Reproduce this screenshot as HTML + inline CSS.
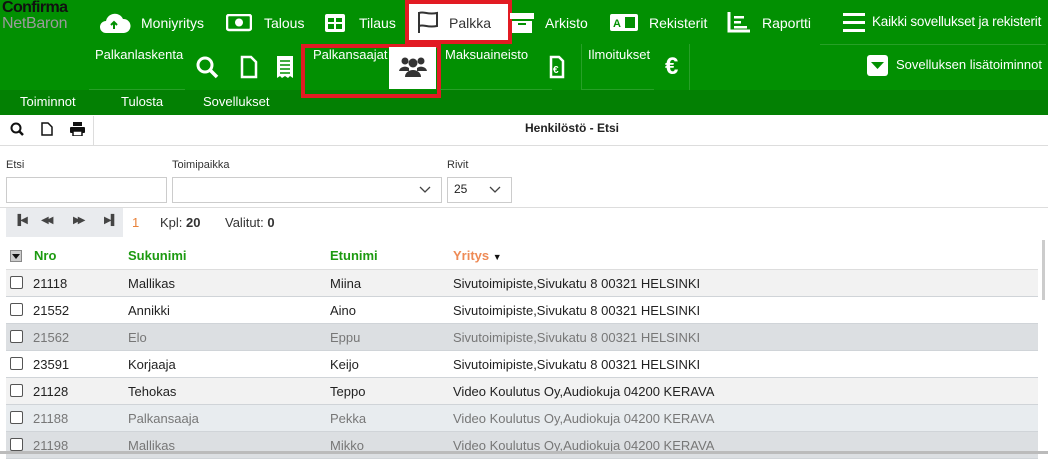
<!DOCTYPE html>
<html><head><meta charset="utf-8"><style>
*{margin:0;padding:0;box-sizing:border-box}
body{width:1048px;height:454px;overflow:hidden;background:#fff;font-family:"Liberation Sans",sans-serif;font-size:13px;color:#222;position:relative}
.a{position:absolute}
.g{background:#029002}
.w{color:#fff}
.nav{font-size:14px;color:#fff;white-space:nowrap}
.row{position:absolute;left:6px;width:1032px;height:27px;border-bottom:1px solid #d0d4d8;font-size:13px}
.row span{position:absolute;top:6px}
.cb{position:absolute;left:4px;top:6px;width:13px;height:13px;border:1px solid #555;border-radius:2px;background:#fff}
.lbl{font-size:11px;color:#333}
.inp{position:absolute;height:26px;border:1px solid #ccc;background:#fff}
</style></head><body>
<div class="a g" style="left:0;top:0;width:1048px;height:90px"></div>
<div class="a" style="left:0;top:90px;width:1048px;height:25px;background:#038003"></div>
<!-- logo -->
<div class="a" style="left:2px;top:0px;font-size:16px;font-weight:bold;color:#111;letter-spacing:-0.6px;line-height:16px">Confirma</div>
<div class="a" style="left:2px;top:16px;font-size:16px;color:#9a9a9a;letter-spacing:-0.3px;line-height:16px">NetBaron</div>
<!-- row1 nav -->
<svg class="a" style="left:99px;top:12px" width="32" height="22" viewBox="0 0 32 22"><path d="M7 21a6 6 0 0 1 0-12 9 9 0 0 1 17-2 7 7 0 0 1 1 14z" fill="#fff"/><path d="M15 17v-7M12 13l3-3 3 3" stroke="#029002" stroke-width="2" fill="none"/></svg>
<div class="a nav" style="left:141px;top:15px">Moniyritys</div>
<svg class="a" style="left:226px;top:14px" width="26" height="18"><rect x="1" y="1" width="24" height="15" rx="2" fill="none" stroke="#fff" stroke-width="2.5"/><circle cx="13" cy="8.5" r="4" fill="#fff"/></svg>
<div class="a nav" style="left:264px;top:15px">Talous</div>
<svg class="a" style="left:324px;top:13px" width="22" height="20"><rect x="1" y="1" width="20" height="18" rx="2" fill="#fff"/><rect x="4" y="5" width="6" height="4" fill="#029002"/><rect x="12" y="5" width="6" height="4" fill="#029002"/><rect x="4" y="11" width="6" height="5" fill="#029002"/><rect x="12" y="11" width="6" height="5" fill="#029002"/></svg>
<div class="a nav" style="left:359px;top:15px">Tilaus</div>
<div class="a" style="left:405px;top:0;width:107px;height:44px;background:#fff;border:4px solid #e21b23"></div>
<svg class="a" style="left:416px;top:10px" width="24" height="24"><path d="M3 23V2M3 3c5-2 8 2 18 0v13c-10 2-13-2-18 0" fill="none" stroke="#333" stroke-width="2"/></svg>
<div class="a" style="left:449px;top:15px;font-size:14px;color:#333">Palkka</div>
<svg class="a" style="left:510px;top:12px" width="24" height="22"><rect x="0" y="1" width="24" height="6" fill="#fff"/><rect x="2" y="9" width="20" height="12" fill="#fff"/><rect x="8" y="11" width="8" height="2" fill="#029002"/></svg>
<div class="a nav" style="left:545px;top:15px">Arkisto</div>
<svg class="a" style="left:610px;top:14px" width="28" height="17"><rect width="28" height="17" rx="2" fill="#fff"/><text x="3" y="13" font-size="11" font-weight="bold" fill="#029002" font-family="Liberation Sans">A</text><rect x="15" y="3" width="10" height="11" fill="#029002"/></svg>
<div class="a nav" style="left:649px;top:15px">Rekisterit</div>
<svg class="a" style="left:727px;top:11px" width="24" height="22"><path d="M2 1v19h21" fill="none" stroke="#fff" stroke-width="3"/><rect x="7" y="5" width="10" height="2.5" fill="#fff"/><rect x="7" y="10" width="7" height="2.5" fill="#fff"/><rect x="7" y="15" width="13" height="2.5" fill="#fff"/></svg>
<div class="a nav" style="left:762px;top:15px">Raportti</div>
<svg class="a" style="left:843px;top:12px" width="22" height="20"><rect y="1" width="22" height="3" fill="#fff"/><rect y="9" width="22" height="3" fill="#fff"/><rect y="17" width="22" height="3" fill="#fff"/></svg>
<div class="a nav" style="left:872px;top:14px;font-size:13.5px;letter-spacing:-0.2px">Kaikki sovellukset ja rekisterit</div>
<div class="a" style="left:820px;top:44px;width:226px;height:1px;background:#27a027"></div>
<!-- row2 -->
<div class="a nav" style="left:95px;top:47px;font-size:13px">Palkanlaskenta</div>
<div class="a" style="left:89px;top:89px;width:96px;height:1px;background:#27a027"></div>
<svg class="a" style="left:195px;top:55px" width="24" height="24"><circle cx="10" cy="10" r="7" fill="none" stroke="#fff" stroke-width="3"/><path d="M15 15l7 7" stroke="#fff" stroke-width="3.5"/></svg>
<svg class="a" style="left:240px;top:55px" width="18" height="24"><path d="M2 2h9l5 5v15H2z" fill="none" stroke="#fff" stroke-width="2.5"/></svg>
<svg class="a" style="left:276px;top:55px" width="18" height="24"><path d="M1 1h16v22l-3-2-2 2-3-2-3 2-2-2-3 2z" fill="#fff"/><path d="M4 6h10M4 10h10M4 14h10M4 18h10" stroke="#029002" stroke-width="1.5"/></svg>
<div class="a" style="left:301px;top:44px;width:140px;height:54px;border:4px solid #e21b23"></div>
<div class="a" style="left:389px;top:47px;width:47px;height:42px;background:#fff"></div>
<svg class="a" style="left:399px;top:56px" width="28" height="22"><circle cx="6" cy="5" r="3.5" fill="#333"/><circle cx="22" cy="5" r="3.5" fill="#333"/><circle cx="14" cy="7" r="4.5" fill="#333"/><path d="M0 15a6 5 0 0 1 10-3v3zM28 15a6 5 0 0 0-10-3v3zM6 21a8 7 0 0 1 16 0z" fill="#333"/></svg>
<div class="a nav" style="left:313px;top:47px;font-size:13px">Palkansaajat</div>
<div class="a nav" style="left:445px;top:47px;font-size:13px">Maksuaineisto</div>
<div class="a" style="left:440px;top:89px;width:112px;height:1px;background:#27a027"></div>
<svg class="a" style="left:549px;top:55px" width="16" height="24"><path d="M2 2h8l4 4v16H2z" fill="none" stroke="#fff" stroke-width="2.5"/><text x="4" y="18" font-size="10" font-weight="bold" fill="#fff" font-family="Liberation Sans">€</text></svg>
<div class="a" style="left:581px;top:44px;width:1px;height:46px;background:#27a027"></div>
<div class="a nav" style="left:588px;top:47px;font-size:13px">Ilmoitukset</div>
<div class="a" style="left:581px;top:89px;width:73px;height:1px;background:#27a027"></div>
<div class="a w" style="left:665px;top:53px;font-size:24px;font-weight:bold">€</div>
<div class="a" style="left:689px;top:44px;width:1px;height:46px;background:#27a027"></div>
<svg class="a" style="left:867px;top:55px" width="21" height="21"><rect width="21" height="21" rx="3" fill="#fff"/><path d="M4 7h13l-6.5 7z" fill="#029002"/></svg>
<div class="a nav" style="left:896px;top:57px;font-size:13px">Sovelluksen lisätoiminnot</div>
<!-- strip -->
<div class="a nav" style="left:20px;top:94px;font-size:13px">Toiminnot</div>
<div class="a nav" style="left:121px;top:94px;font-size:13px">Tulosta</div>
<div class="a nav" style="left:203px;top:94px;font-size:13px">Sovellukset</div>
<!-- toolbar -->
<div class="a" style="left:93px;top:116px;width:1px;height:29px;background:#ddd"></div>
<div class="a" style="left:0;top:145px;width:1048px;height:1px;background:#ddd"></div>
<svg class="a" style="left:10px;top:122px" width="14" height="14"><circle cx="6" cy="6" r="4.5" fill="none" stroke="#111" stroke-width="2"/><path d="M9 9l4 4" stroke="#111" stroke-width="2.5"/></svg>
<svg class="a" style="left:41px;top:122px" width="12" height="14"><path d="M1 1h6l4 4v8H1z" fill="none" stroke="#111" stroke-width="1.5"/></svg>
<svg class="a" style="left:70px;top:122px" width="15" height="14"><rect x="3" y="0" width="9" height="4" fill="#111"/><rect x="0" y="5" width="15" height="6" rx="1" fill="#111"/><rect x="3" y="9" width="9" height="5" fill="#fff" stroke="#111" stroke-width="1.5"/></svg>
<div class="a" style="left:525px;top:121px;font-size:12px;font-weight:bold;color:#222">Henkilöstö - Etsi</div>
<!-- filters -->
<div class="a lbl" style="left:6px;top:159px">Etsi</div>
<div class="a lbl" style="left:172px;top:159px">Toimipaikka</div>
<div class="a lbl" style="left:447px;top:159px">Rivit</div>
<div class="inp" style="left:6px;top:177px;width:161px"></div>
<div class="inp" style="left:172px;top:177px;width:270px"></div>
<div class="inp" style="left:447px;top:177px;width:65px"></div>
<svg class="a" style="left:419px;top:186px" width="12" height="8"><path d="M1 1l5 5 5-5" fill="none" stroke="#444" stroke-width="1.3"/></svg>
<svg class="a" style="left:489px;top:186px" width="12" height="8"><path d="M1 1l5 5 5-5" fill="none" stroke="#444" stroke-width="1.3"/></svg>
<div class="a" style="left:454px;top:182px;font-size:12px">25</div>
<div class="a" style="left:0;top:207px;width:1048px;height:1px;background:#ddd"></div>
<!-- pager -->
<div class="a" style="left:6px;top:208px;width:117px;height:29px;background:#e9ebee"></div>
<div class="a" style="left:14px;top:215px;font-size:10px;color:#444;letter-spacing:-1px">▐◀</div>
<div class="a" style="left:41px;top:215px;font-size:10px;color:#444;letter-spacing:-3px">◀◀</div>
<div class="a" style="left:73px;top:215px;font-size:10px;color:#444;letter-spacing:-3px">▶▶</div>
<div class="a" style="left:104px;top:215px;font-size:10px;color:#444;letter-spacing:-1px">▶▌</div>
<div class="a" style="left:132px;top:215px;font-size:13px;color:#e8823a">1</div>
<div class="a" style="left:160px;top:215px;font-size:13px;color:#333">Kpl: <b>20</b></div>
<div class="a" style="left:225px;top:215px;font-size:13px;color:#333">Valitut: <b>0</b></div>
<!-- header -->
<div class="a" style="left:10px;top:250px;width:12px;height:12px;background:#ccc;border:1px solid #888"></div>
<div class="a" style="left:12px;top:254px;border-left:4px solid transparent;border-right:4px solid transparent;border-top:5px solid #111"></div>
<div class="a" style="left:34px;top:248px;font-weight:bold;color:#1c9a10">Nro</div>
<div class="a" style="left:128px;top:248px;font-weight:bold;color:#1c9a10">Sukunimi</div>
<div class="a" style="left:330px;top:248px;font-weight:bold;color:#1c9a10">Etunimi</div>
<div class="a" style="left:453px;top:248px;font-weight:bold;color:#ee8a55">Yritys <span style="color:#111;font-size:9px">▼</span></div>
<div class="a" style="left:6px;top:269px;width:1032px;height:1px;background:#ddd"></div>
<!-- rows -->
<div class="row" style="top:270px;background:#f2f2f2"><i class="cb"></i><span style="left:27px">21118</span><span style="left:122px">Mallikas</span><span style="left:324px">Miina</span><span style="left:447px">Sivutoimipiste,Sivukatu 8 00321 HELSINKI</span></div>
<div class="row" style="top:297px;background:#fff"><i class="cb"></i><span style="left:27px">21552</span><span style="left:122px">Annikki</span><span style="left:324px">Aino</span><span style="left:447px">Sivutoimipiste,Sivukatu 8 00321 HELSINKI</span></div>
<div class="row" style="top:324px;background:#dcdfe2;color:#777"><i class="cb"></i><span style="left:27px">21562</span><span style="left:122px">Elo</span><span style="left:324px">Eppu</span><span style="left:447px">Sivutoimipiste,Sivukatu 8 00321 HELSINKI</span></div>
<div class="row" style="top:351px;background:#fff"><i class="cb"></i><span style="left:27px">23591</span><span style="left:122px">Korjaaja</span><span style="left:324px">Keijo</span><span style="left:447px">Sivutoimipiste,Sivukatu 8 00321 HELSINKI</span></div>
<div class="row" style="top:378px;background:#f2f2f2"><i class="cb"></i><span style="left:27px">21128</span><span style="left:122px">Tehokas</span><span style="left:324px">Teppo</span><span style="left:447px">Video Koulutus Oy,Audiokuja 04200 KERAVA</span></div>
<div class="row" style="top:405px;background:#e8ecef;color:#777"><i class="cb"></i><span style="left:27px">21188</span><span style="left:122px">Palkansaaja</span><span style="left:324px">Pekka</span><span style="left:447px">Video Koulutus Oy,Audiokuja 04200 KERAVA</span></div>
<div class="row" style="top:432px;background:#dcdfe2;color:#777"><i class="cb"></i><span style="left:27px">21198</span><span style="left:122px">Mallikas</span><span style="left:324px">Mikko</span><span style="left:447px">Video Koulutus Oy,Audiokuja 04200 KERAVA</span></div>
<div class="a" style="left:0;top:451px;width:1048px;height:3px;background:#bbb"></div>
<div class="a" style="left:1042px;top:240px;width:3px;height:60px;background:#ccc"></div>
</body></html>
